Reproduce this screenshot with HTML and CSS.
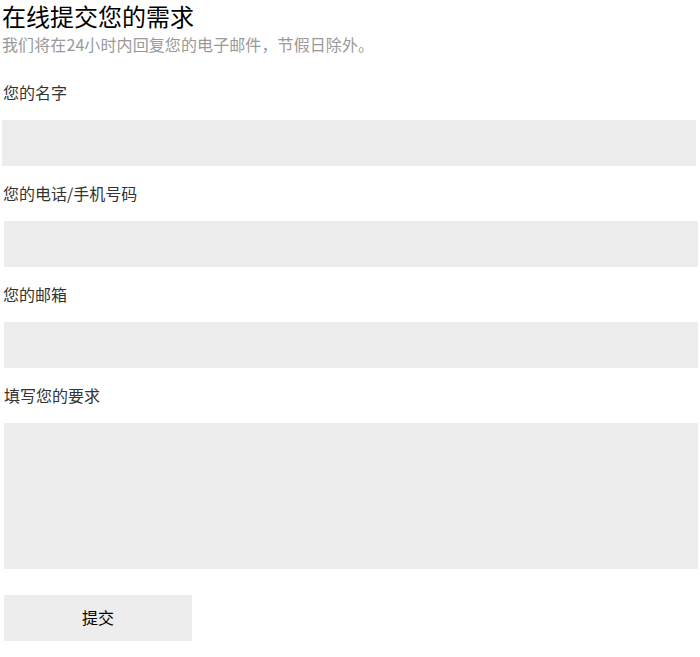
FILE: index.html
```html
<!DOCTYPE html>
<html lang="zh-CN">
<head>
<meta charset="utf-8">
<title>在线提交您的需求</title>
<link rel="stylesheet" href="styles.css">
</head>
<body>
<div class="page">
  <header class="head">
    <h1 class="title">在线提交您的需求</h1>
    <p class="subtitle">我们将在24小时内回复您的电子邮件，节假日除外。</p>
  </header>
  <form class="form">
    <div class="field">
      <label class="label">您的名字</label>
      <input class="input input-first" type="text">
    </div>
    <div class="field">
      <label class="label">您的电话/手机号码</label>
      <input class="input" type="text">
    </div>
    <div class="field">
      <label class="label">您的邮箱</label>
      <input class="input" type="text">
    </div>
    <div class="field">
      <label class="label label-indent">填写您的要求</label>
      <textarea class="input textarea"></textarea>
    </div>
    <button class="submit" type="button">提交</button>
  </form>
</div>
</body>
</html>
```
FILE: styles.css
```css
html, body {
  margin: 0;
  padding: 0;
  background: #fff;
}
body {
  font-family: "Noto Sans CJK SC", "Noto Sans", "Liberation Sans", sans-serif;
  color: #333;
}
.page {
  width: 700px;
}
.head {
  padding-left: 2px;
}
.title {
  margin: 0;
  font-size: 24px;
  font-weight: normal;
  line-height: 32px;
  color: #000;
}
.subtitle {
  margin: 0;
  font-size: 16px;
  line-height: 24px;
  color: #999;
  letter-spacing: 0.1px;
}
.form {
  margin-top: 24px;
  padding-left: 4px;
  display: flex;
  flex-direction: column;
  gap: 15px;
}
.field {
  display: flex;
  flex-direction: column;
}
.label {
  display: block;
  font-size: 16px;
  line-height: 24px;
  height: 24px;
  margin-bottom: 16px;
  margin-left: -1px;
  color: #333;
}
.label-indent {
  margin-left: 0;
}
.input {
  display: block;
  box-sizing: border-box;
  width: 694px;
  height: 46px;
  margin: 0;
  border: none;
  outline: none;
  background: #ededed;
  font: inherit;
  padding: 0 10px;
}
.input-first {
  margin-left: -2px;
}
.textarea {
  height: 146px;
  resize: none;
  padding: 10px;
}
.submit {
  margin-top: 11px;
  width: 188px;
  height: 46px;
  border: none;
  background: #ededed;
  font-family: inherit;
  font-size: 16px;
  color: #000;
  padding: 0 0 3px;
  cursor: pointer;
}
```
